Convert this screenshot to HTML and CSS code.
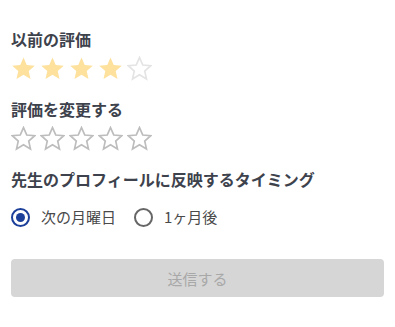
FILE: index.html
```html
<!DOCTYPE html>
<html lang="ja">
<head>
  <meta charset="UTF-8">
  <meta name="viewport" content="width=device-width, initial-scale=1.0">
  <title>評価</title>
  <link rel="stylesheet" href="styles.css">
</head>
<body>
  <div class="formulario">
    <h2 class="titulo">以前の評価</h2>
    <div class="estrelas">
      <svg class="estrela cheia" viewBox="0 0 24 24"><path d="M12 1.5l3.1 7.1 7.7.7-5.8 5.1 1.7 7.6L12 18 5.3 22l1.7-7.6-5.8-5.1 7.7-.7z"/></svg>
      <svg class="estrela cheia" viewBox="0 0 24 24"><path d="M12 1.5l3.1 7.1 7.7.7-5.8 5.1 1.7 7.6L12 18 5.3 22l1.7-7.6-5.8-5.1 7.7-.7z"/></svg>
      <svg class="estrela cheia" viewBox="0 0 24 24"><path d="M12 1.5l3.1 7.1 7.7.7-5.8 5.1 1.7 7.6L12 18 5.3 22l1.7-7.6-5.8-5.1 7.7-.7z"/></svg>
      <svg class="estrela cheia" viewBox="0 0 24 24"><path d="M12 1.5l3.1 7.1 7.7.7-5.8 5.1 1.7 7.6L12 18 5.3 22l1.7-7.6-5.8-5.1 7.7-.7z"/></svg>
      <svg class="estrela vazia clara" viewBox="0 0 24 24"><path d="M12 1.5l3.1 7.1 7.7.7-5.8 5.1 1.7 7.6L12 18 5.3 22l1.7-7.6-5.8-5.1 7.7-.7z"/></svg>
    </div>

    <h2 class="titulo">評価を変更する</h2>
    <div class="estrelas">
      <svg class="estrela vazia" viewBox="0 0 24 24"><path d="M12 1.5l3.1 7.1 7.7.7-5.8 5.1 1.7 7.6L12 18 5.3 22l1.7-7.6-5.8-5.1 7.7-.7z"/></svg>
      <svg class="estrela vazia" viewBox="0 0 24 24"><path d="M12 1.5l3.1 7.1 7.7.7-5.8 5.1 1.7 7.6L12 18 5.3 22l1.7-7.6-5.8-5.1 7.7-.7z"/></svg>
      <svg class="estrela vazia" viewBox="0 0 24 24"><path d="M12 1.5l3.1 7.1 7.7.7-5.8 5.1 1.7 7.6L12 18 5.3 22l1.7-7.6-5.8-5.1 7.7-.7z"/></svg>
      <svg class="estrela vazia" viewBox="0 0 24 24"><path d="M12 1.5l3.1 7.1 7.7.7-5.8 5.1 1.7 7.6L12 18 5.3 22l1.7-7.6-5.8-5.1 7.7-.7z"/></svg>
      <svg class="estrela vazia" viewBox="0 0 24 24"><path d="M12 1.5l3.1 7.1 7.7.7-5.8 5.1 1.7 7.6L12 18 5.3 22l1.7-7.6-5.8-5.1 7.7-.7z"/></svg>
    </div>

    <h2 class="titulo">先生のプロフィールに反映するタイミング</h2>
    <div class="opcoes">
      <label class="opcao">
        <span class="radio marcado"></span>
        <span>次の月曜日</span>
      </label>
      <label class="opcao">
        <span class="radio"></span>
        <span>1ヶ月後</span>
      </label>
    </div>

    <button class="enviar" disabled>送信する</button>
  </div>
</body>
</html>
```

FILE: styles.css
```css
body {
  margin: 0;
  font-family: "Noto Sans CJK JP", "Noto Sans", sans-serif;
  background-color: #fff;
}

.formulario {
  padding: 29px 11px 20px;
}

.titulo {
  margin: 0;
  font-size: 16px;
  line-height: 20px;
  font-weight: bold;
  color: #3d424c;
}

.estrelas {
  display: flex;
  gap: 4px;
  margin: 7px 0 18px;
}

.estrela {
  width: 25px;
  height: 25px;
}

.estrela.cheia {
  fill: #fde19c;
}

.estrela.vazia {
  fill: none;
  stroke: #bdbdbd;
  stroke-width: 1.6;
}

.estrela.vazia.clara {
  stroke: #e4e4e4;
}

.opcoes {
  display: flex;
  gap: 18px;
  margin-top: 18px;
}

.opcao {
  display: flex;
  align-items: center;
  gap: 11px;
  font-size: 15px;
  line-height: 20px;
  color: #4a4a4a;
}

.radio {
  width: 19px;
  height: 19px;
  box-sizing: border-box;
  border: 2px solid #666;
  border-radius: 50%;
  display: flex;
  align-items: center;
  justify-content: center;
}

.radio.marcado {
  border-color: #1c3f9a;
}

.radio.marcado::after {
  content: "";
  width: 9px;
  height: 9px;
  border-radius: 50%;
  background-color: #1c3f9a;
}

.enviar {
  display: block;
  width: 100%;
  height: 38px;
  margin-top: 32px;
  border: none;
  border-radius: 4px;
  background-color: #d6d6d6;
  color: #a8a8a8;
  font-family: inherit;
  font-size: 15px;
}
```
